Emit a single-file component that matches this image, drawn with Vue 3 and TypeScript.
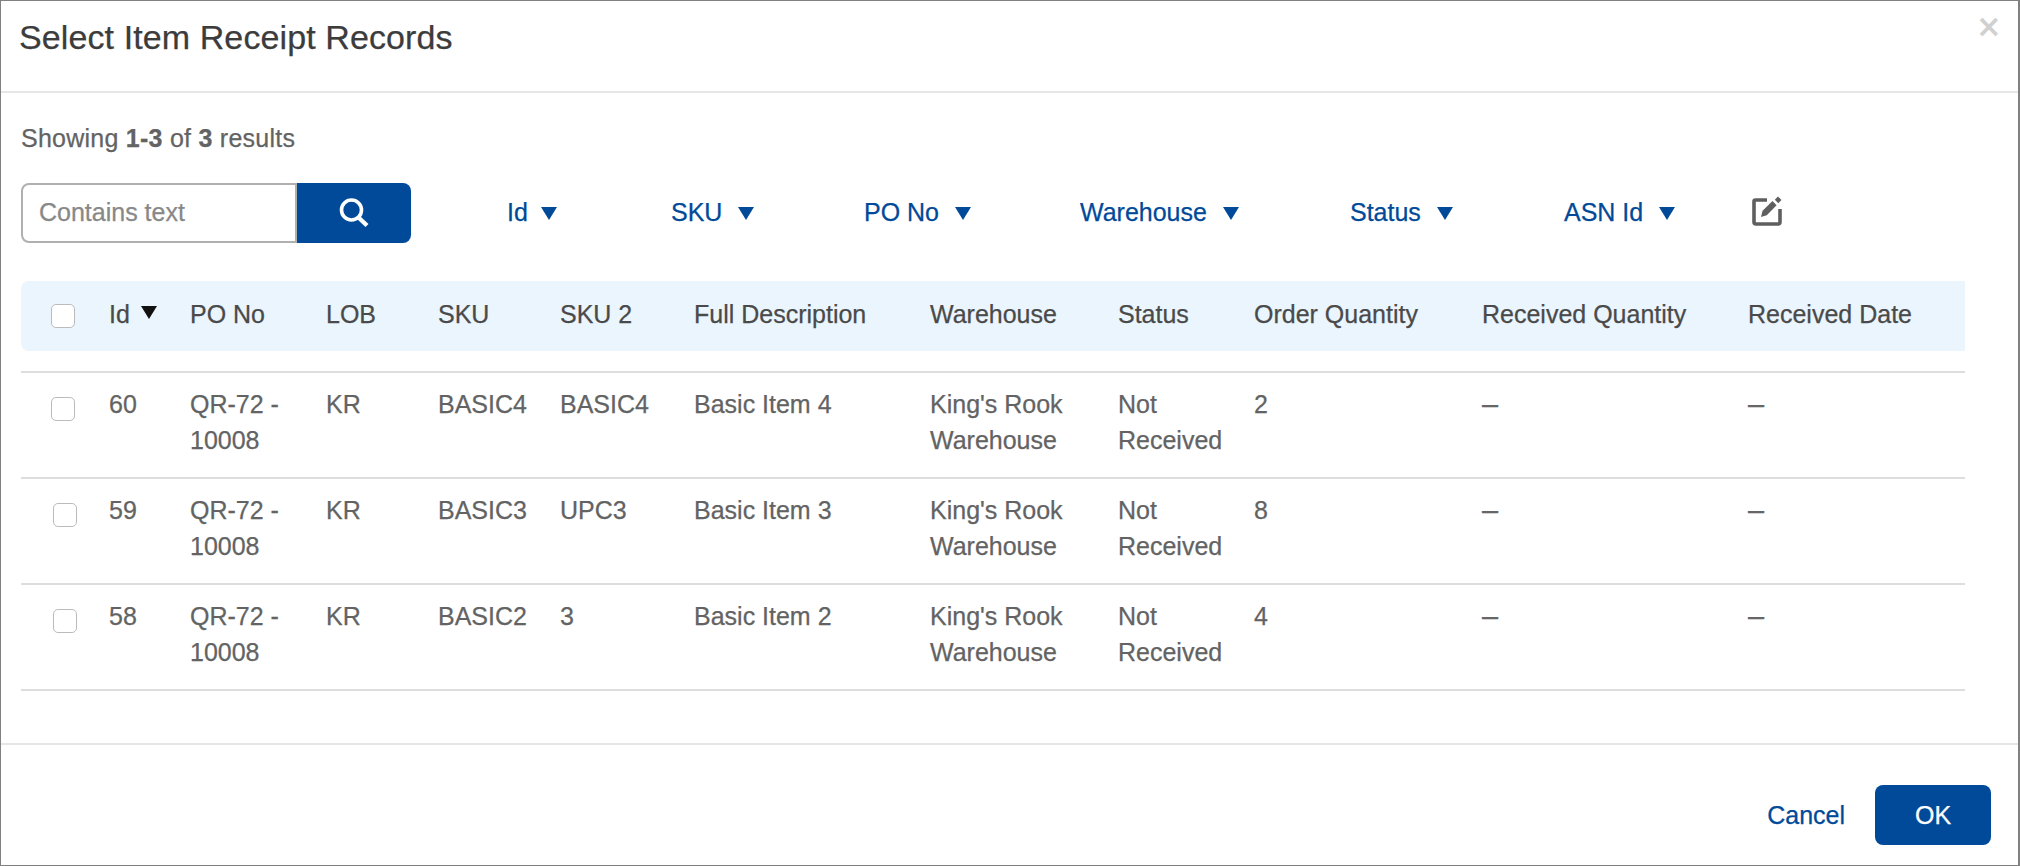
<script setup lang="ts">
interface Row {
  id: number
  sku: string
  sku2: string
  desc: string
  qty: number
}
const columns = ['PO No', 'LOB', 'SKU', 'SKU 2', 'Full Description', 'Warehouse', 'Status', 'Order Quantity', 'Received Quantity', 'Received Date']
const widths = [88, 81, 136, 112, 122, 134, 236, 188, 136, 228, 266, 217]
const rows: Row[] = [
  { id: 60, sku: 'BASIC4', sku2: 'BASIC4', desc: 'Basic Item 4', qty: 2 },
  { id: 59, sku: 'BASIC3', sku2: 'UPC3', desc: 'Basic Item 3', qty: 8 },
  { id: 58, sku: 'BASIC2', sku2: '3', desc: 'Basic Item 2', qty: 4 },
]
const filters = ['Id', 'SKU', 'PO No', 'Warehouse', 'Status', 'ASN Id']
</script>

<template>
  <div class="modal">
    <header class="head">
      <h1 class="title">Select Item Receipt Records</h1>
      <span class="close">×</span>
    </header>
    <main class="body">
      <p class="count">Showing <b>1-3</b> of <b>3</b> results</p>
      <div class="tools">
        <div class="search">
          <div class="input">Contains text</div>
          <button class="go" type="button" aria-label="Search">
            <svg width="30" height="30" viewBox="0 0 30 30">
              <circle cx="12.5" cy="12" r="10" fill="none" stroke="#fff" stroke-width="3.6" />
              <path d="M19.5 19.5 L28 27.5" fill="none" stroke="#fff" stroke-width="4.4" />
            </svg>
          </button>
        </div>
        <div class="filters">
          <span v-for="f in filters" :key="f" class="filter">{{ f }}<i class="tri"></i></span>
          <svg class="edit" width="30" height="30" viewBox="0 0 30 30">
            <path d="M15 4 H3.5 Q2 4 2 5.5 V26 Q2 28 4 28 H26 Q28 28 28 26 V13" fill="none" stroke="#5f5f5f" stroke-width="3.6" />
            <path d="M9 21 L10.6 14.8 L20.5 5 L24.6 9.2 L14.8 19.2 Z" fill="#5f5f5f" />
            <path d="M26 0.5 L29.5 4 L26.3 7.3 L22.8 3.7 Z" fill="#5f5f5f" />
          </svg>
        </div>
      </div>
      <table class="grid">
        <colgroup>
          <col v-for="(w, i) in widths" :key="i" :style="{ width: w + 'px' }" />
        </colgroup>
        <thead>
          <tr class="band">
            <th class="first"><span class="check"></span></th>
            <th>Id<i class="tri dark"></i></th>
            <th v-for="c in columns" :key="c">{{ c }}</th>
          </tr>
          <tr class="spacer"><th colspan="12"></th></tr>
        </thead>
        <tbody>
          <tr v-for="(r, i) in rows" :key="r.id" :class="{ inset: i > 0 }">
            <td class="first"><span class="check"></span></td>
            <td>{{ r.id }}</td>
            <td>QR-72 - 10008</td>
            <td>KR</td>
            <td>{{ r.sku }}</td>
            <td>{{ r.sku2 }}</td>
            <td>{{ r.desc }}</td>
            <td>King's Rook Warehouse</td>
            <td>Not Received</td>
            <td>{{ r.qty }}</td>
            <td class="dash">–</td>
            <td class="dash">–</td>
          </tr>
        </tbody>
      </table>
    </main>
    <footer class="foot">
      <span class="cancel">Cancel</span>
      <button class="ok" type="button">OK</button>
    </footer>
  </div>
</template>

<style>
html, body { margin: 0; background: #fff; }
</style>

<style scoped>
.modal {
  box-sizing: border-box;
  width: 2020px;
  height: 866px;
  border: 1px solid #808080;
  border-right-width: 2px;
  display: flex;
  flex-direction: column;
  font-family: "Liberation Sans", Arial, sans-serif;
  color: #636363;
  overflow: hidden;
  -webkit-text-stroke: 0.25px currentColor;
}
.head {
  height: 90px;
  flex: none;
  border-bottom: 2px solid #e6e6e6;
  display: flex;
  justify-content: space-between;
  padding: 0 18px 0 18px;
}
.title {
  margin: 18px 0 0;
  font-size: 34px;
  letter-spacing: 0.1px;
  line-height: 36px;
  font-weight: 400;
  color: #3c3c3c;
}
.close {
  margin-top: 8px;
  font-size: 38px;
  line-height: 36px;
  font-weight: 400;
  color: #d0d0d0;
  -webkit-text-stroke: 0.8px #d0d0d0;
}
.body {
  flex: 1;
  padding: 0 0 0 20px;
}
.count {
  margin: 30px 0 0;
  font-size: 25px;
  letter-spacing: 0.25px;
  line-height: 30px;
}
.tools {
  display: flex;
  margin-top: 30px;
  height: 60px;
}
.search { display: flex; width: 390px; flex: none; }
.input {
  box-sizing: border-box;
  width: 276px;
  height: 60px;
  border: 2px solid #b0b0b0;
  border-right-width: 2px;
  border-radius: 8px 0 0 8px;
  padding-left: 16px;
  font-size: 25px;
  line-height: 54px;
  color: #888;
}
.go {
  width: 114px;
  height: 60px;
  padding: 0;
  border: 0;
  border-radius: 0 8px 8px 0;
  background: #004a99;
  display: flex;
  align-items: center;
  justify-content: center;
}
.filters {
  display: grid;
  grid-template-columns: 164px 193px 216px 270px 214px 188px auto;
  margin-left: 96px;
  align-items: center;
}
.filter {
  font-size: 25px;
  color: #004a99;
  display: flex;
  align-items: center;
  padding-bottom: 2px;
}
.tri {
  display: inline-block;
  width: 0;
  height: 0;
  margin-top: 2px;
  margin-left: 16px;
  border-left: 8px solid transparent;
  border-right: 8px solid transparent;
  border-top: 13px solid #004a99;
}
.filter:first-child .tri { margin-left: 13px; }
.tri.dark { border-top-color: #111; margin-top: 0; margin-left: 11px; vertical-align: 4px; }
.edit { margin-top: -4px; }
.grid {
  width: 1944px;
  table-layout: fixed;
  border-collapse: separate;
  border-spacing: 0;
  margin-top: 38px;
  font-size: 25px;
  line-height: 36px;
}
.band th {
  height: 70px;
  padding: 0 0 5px;
  box-sizing: border-box;
  background: #eaf5fe;
  text-align: left;
  font-weight: 400;
  color: #4a4a4a;
  white-space: nowrap;
}
.band th.first { border-radius: 8px 0 0 8px; padding-bottom: 0; }
.spacer th { height: 20px; padding: 0; border-bottom: 2px solid #ddd; }
td {
  box-sizing: content-box;
  padding: 0;
  vertical-align: top;
  border-bottom: 2px solid #ddd;
  padding-top: 13px;
  height: 91px;
}
td.dash { font-size: 29px; color: #666; }
.first { padding-left: 30px; }
th.first { padding-left: 30px; }
.check {
  display: block;
  box-sizing: border-box;
  width: 24px;
  height: 24px;
  border: 1.5px solid #bbb;
  border-radius: 5px;
  background: #fff;
}
td.first .check { margin-top: 11px; }
.inset td.first .check { margin-left: 2px; }
.foot {
  flex: none;
  height: 122px;
  box-sizing: border-box;
  border-top: 2px solid #e6e6e6;
  display: flex;
  justify-content: flex-end;
  align-items: flex-start;
  padding: 40px 27px 0 0;
}
.cancel {
  font-size: 25px;
  line-height: 60px;
  color: #004a99;
  margin-right: 30px;
}
.ok {
  width: 116px;
  height: 60px;
  border: 0;
  border-radius: 8px;
  background: #004a99;
  color: #fff;
  font: 400 25px "Liberation Sans", Arial, sans-serif;
}
</style>
